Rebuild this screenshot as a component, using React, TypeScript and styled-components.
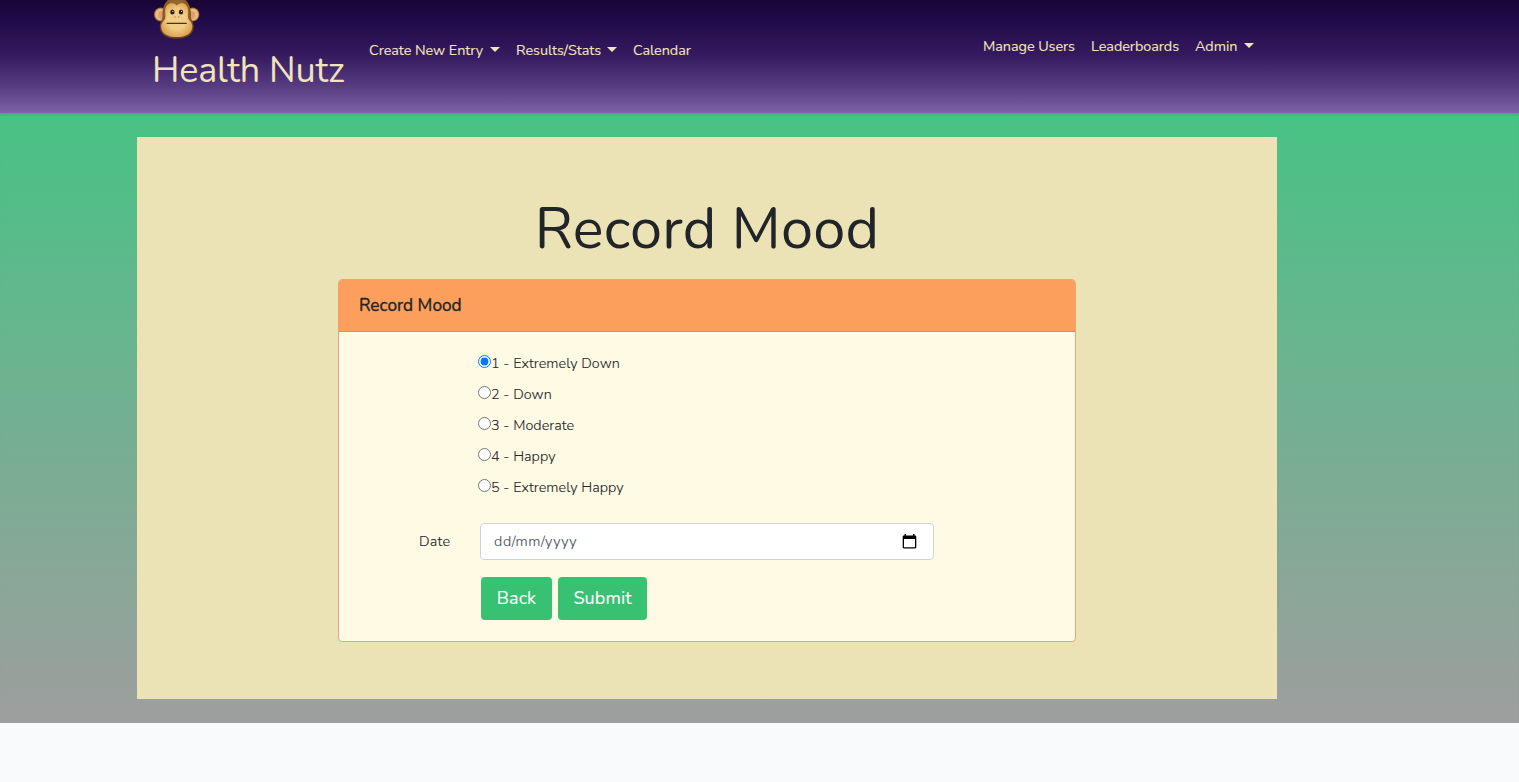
import React from "react";
import styled, { createGlobalStyle } from "styled-components";

const GlobalStyle = createGlobalStyle`
  *, *::before, *::after { box-sizing: border-box; }
  body {
    margin: 0;
    background: #f8fafc;
    color: #212529;
    font-family: Nunito, Lato, "Open Sans", sans-serif;
    font-size: 14.4px;
    line-height: 23px;
  }
`;

const Navbar = styled.header`
  display: flex;
  height: 113px;
  padding: 0 265px 0 153px;
  overflow: hidden;
  color: #f0e4b8;
  background: linear-gradient(#190536 0%, #1f0a46 15%, #35195f 48%, #5a3e83 78%, #7d62a8 100%);
`;

const Brand = styled.a`
  display: flex;
  flex-direction: column;
  width: 216px;
  color: inherit;
`;

const BrandName = styled.span`
  margin: 4px 0 0 -1px;
  font-size: 36px;
  line-height: 54px;
  letter-spacing: -0.2px;
  white-space: nowrap;
`;

const Nav = styled.nav<{ $top: number }>`
  display: flex;
  gap: 16px;
  padding-top: ${(p) => p.$top}px;
`;

const RightNav = styled(Nav)`
  margin-left: auto;
`;

const NavLink = styled.a<{ $width: number }>`
  display: flex;
  flex: none;
  justify-content: space-between;
  width: ${(p) => p.$width}px;
  color: inherit;
  letter-spacing: -0.05px;
  -webkit-text-stroke: 0.1px currentColor;
  white-space: nowrap;
`;

const Caret = styled.i`
  width: 0;
  height: 0;
  margin-top: 8px;
  border: 5px solid transparent;
  border-top-color: currentColor;
  border-bottom: 0;
`;

const Main = styled.main`
  height: 610px;
  padding: 24px 242px 24px 137px;
  background: linear-gradient(#48c285, #9e9e9e);
  box-shadow: inset 0 3px 3px -2px rgba(0, 0, 0, 0.15);
`;

const Panel = styled.section`
  display: flex;
  flex-direction: column;
  align-items: center;
  height: 562px;
  padding-top: 57px;
  background: #ebe3b5;
`;

const Title = styled.h1`
  margin: 0 0 15px;
  font-size: 57.6px;
  font-weight: 400;
  line-height: 70px;
  letter-spacing: 0.2px;
`;

const Card = styled.div`
  width: 738px;
  height: 363px;
  border: 1px solid #f0a475;
  border-radius: 4px;
  overflow: hidden;
  background: #fffae3;
`;

const CardHeader = styled.div`
  height: 52px;
  padding: 14px 20px;
  border-bottom: 1px solid #ef8850;
  background: #fd9f5c;
  font-size: 17.3px;
  -webkit-text-stroke: 0.35px currentColor;
`;

const Form = styled.form`
  padding-top: 20px;
`;

const Options = styled.div`
  display: flex;
  flex-direction: column;
  gap: 8px;
  padding-left: 139px;
`;

const Option = styled.label`
  display: flex;
  height: 23px;
  font-weight: 300;
  letter-spacing: 0.05px;
  -webkit-text-stroke: 0.1px currentColor;
`;

const Radio = styled.input`
  width: 13px;
  height: 13px;
  margin: 3px 0 0;
`;

const DateRow = styled.div`
  display: flex;
  align-items: center;
  margin-top: 24px;
  padding-left: 80px;
`;

const DateLabel = styled.label`
  width: 61px;
  font-weight: 300;
  letter-spacing: 0.25px;
  -webkit-text-stroke: 0.1px currentColor;
`;

const DateField = styled.div`
  display: flex;
  align-items: center;
  justify-content: space-between;
  width: 454px;
  height: 37px;
  padding: 0 16px 0 13px;
  border: 1px solid #ced4da;
  border-radius: 4px;
  background: #fff;
  color: #495057;
  font-weight: 300;
  letter-spacing: 0.62px;
  -webkit-text-stroke: 0.1px currentColor;
`;

const Actions = styled.div`
  display: flex;
  gap: 6px;
  margin-top: 17px;
  padding-left: 142px;
`;

const Button = styled.button<{ $width: number }>`
  width: ${(p) => p.$width}px;
  height: 43px;
  padding: 0 0 1px;
  border: 0;
  border-radius: 4px;
  background: #38c172;
  color: #fff;
  font: 400 18px/27px Nunito, Lato, sans-serif;
  letter-spacing: 0.1px;
  -webkit-text-stroke: 0.1px currentColor;
`;

const Monkey = () => (
  <svg width="48" height="40" viewBox="0 0 48 40">
    <defs>
      <radialGradient id="fur" cx="50%" cy="40%" r="60%">
        <stop offset="0.5" stopColor="#98662b" />
        <stop offset="1" stopColor="#65401a" />
      </radialGradient>
      <radialGradient id="face" cx="50%" cy="48%" r="58%">
        <stop offset="0.5" stopColor="#f3cc85" />
        <stop offset="1" stopColor="#d79b4b" />
      </radialGradient>
    </defs>
    <ellipse cx="7.7" cy="14.5" rx="6.7" ry="7" fill="#a06c32" />
    <ellipse cx="39.7" cy="14.5" rx="6.7" ry="7" fill="#a06c32" />
    <ellipse cx="7.7" cy="14.5" rx="5.7" ry="6" fill="#eabb80" />
    <ellipse cx="39.7" cy="14.5" rx="5.7" ry="6" fill="#eabb80" />
    <ellipse cx="9" cy="15" rx="3.7" ry="4" fill="#d9a172" />
    <ellipse cx="38.4" cy="15" rx="3.7" ry="4" fill="#d9a172" />
    <path d="M9.5 16C9 5 14-3 23.7-3S38.4 5 37.9 16c-.2 4 2.8 5.5 2.8 11 0 7.5-7 11.8-17 11.8S6.8 34.5 6.8 27c0-5.5 2.9-7 2.7-11Z" fill="url(#fur)" />
    <path d="M12.2 10.5C12.2 3.5 19.5 1 23.7 5.5 27.9 1 35.2 3.5 35.2 10.5c0 5-1.2 6.8 1.3 9.8 1.8 2.2 2.9 4 2.9 6.2 0 7-6.4 10.6-15.7 10.6S8.1 33.5 8.1 26.5c0-2.2 1-4 2.9-6.2 2.4-3 1.2-4.8 1.2-9.8Z" fill="url(#face)" />
    <ellipse cx="19.4" cy="12" rx="2.2" ry="2.6" fill="#2b2118" />
    <ellipse cx="28" cy="12" rx="2.2" ry="2.6" fill="#2b2118" />
    <circle cx="19.9" cy="11.4" r="0.6" fill="#e8dac6" />
    <circle cx="28.5" cy="11.4" r="0.6" fill="#e8dac6" />
    <path d="m21.4 16.7 1.2.6m2.6 0 1.2-.6" stroke="#90602c" strokeWidth="0.9" />
    <path d="M14.2 23.4h19" fill="none" stroke="#4c331c" strokeWidth="1.3" strokeLinecap="round" />
  </svg>
);

const CalendarIcon = () => (
  <svg width="15" height="15" viewBox="0 0 15 15">
    <path fill="#000" fillRule="evenodd" d="M2.5 0H4v1.5h7V0h1.5v1.5h.5c.8 0 1.3.5 1.3 1.2v10.6c0 .7-.5 1.2-1.3 1.2H2c-.8 0-1.3-.5-1.3-1.2V2.7C.7 2 1.2 1.5 2 1.5h.5ZM2 5v8.2h11V5Z" />
  </svg>
);

const moods = [
  "1 - Extremely Down",
  "2 - Down",
  "3 - Moderate",
  "4 - Happy",
  "5 - Extremely Happy",
];

export default function App() {
  return (
    <>
      <GlobalStyle />
      <Navbar>
        <Brand>
          <Monkey />
          <BrandName>Health Nutz</BrandName>
        </Brand>
        <Nav $top={39}>
          <NavLink $width={131}>Create New Entry<Caret /></NavLink>
          <NavLink $width={101}>Results/Stats<Caret /></NavLink>
          <NavLink $width={58}>Calendar</NavLink>
        </Nav>
        <RightNav $top={35}>
          <NavLink $width={92}>Manage Users</NavLink>
          <NavLink $width={88}>Leaderboards</NavLink>
          <NavLink $width={59}>Admin<Caret /></NavLink>
        </RightNav>
      </Navbar>
      <Main>
        <Panel>
          <Title>Record Mood</Title>
          <Card>
            <CardHeader>Record Mood</CardHeader>
            <Form>
              <Options>
                {moods.map((mood, index) => (
                  <Option key={mood}>
                    <Radio type="radio" name="mood" defaultChecked={index === 0} />
                    {mood}
                  </Option>
                ))}
              </Options>
              <DateRow>
                <DateLabel>Date</DateLabel>
                <DateField>dd/mm/yyyy<CalendarIcon /></DateField>
              </DateRow>
              <Actions>
                <Button type="button" $width={71}>Back</Button>
                <Button type="button" $width={89}>Submit</Button>
              </Actions>
            </Form>
          </Card>
        </Panel>
      </Main>
    </>
  );
}
